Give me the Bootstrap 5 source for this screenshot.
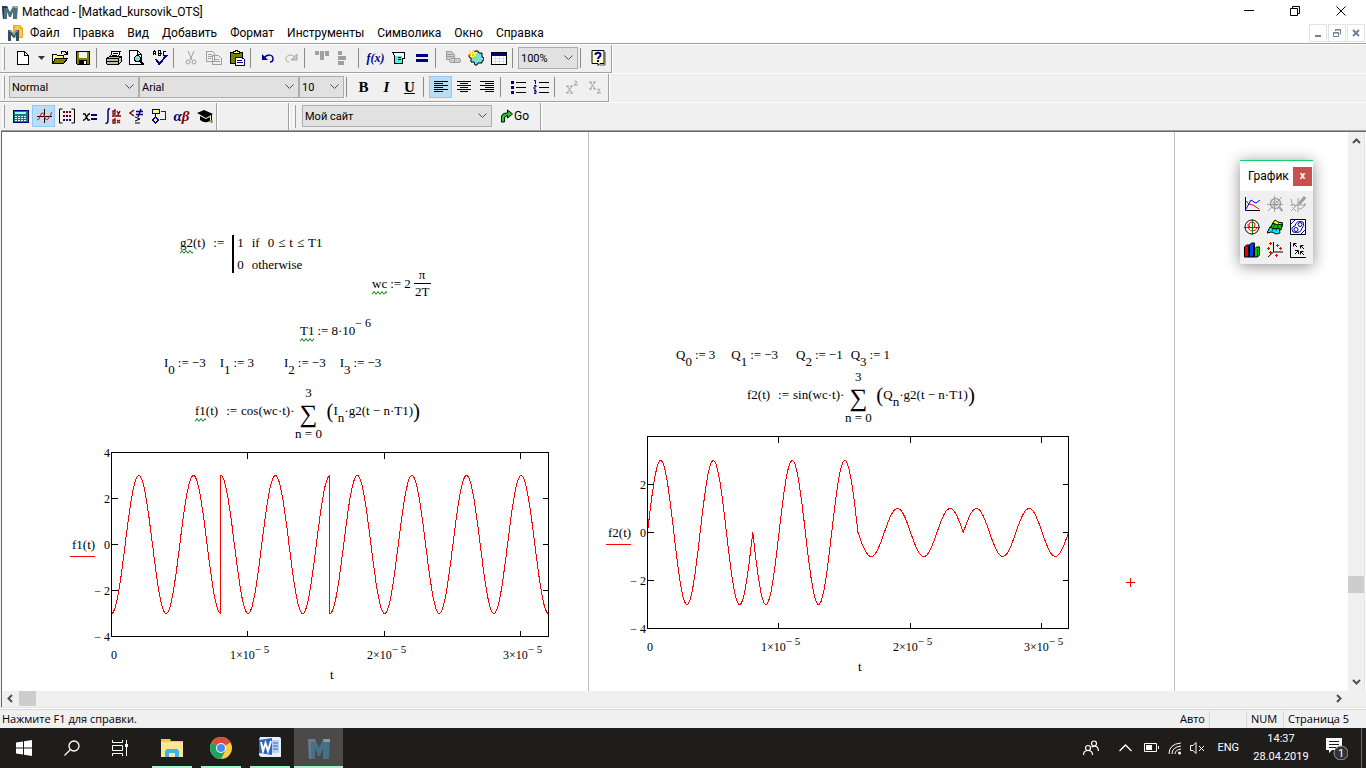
<!DOCTYPE html>
<html lang="ru">
<head>
<meta charset="utf-8">
<meta name="viewport" content="width=device-width, initial-scale=1">
<title>Mathcad - [Matkad_kursovik_OTS]</title>
<link href="https://cdn.jsdelivr.net/npm/bootstrap@5.3.0/dist/css/bootstrap.min.css" rel="stylesheet">
<style>
  :root { --ui: Roboto, "Open Sans", sans-serif; --face: #f0f0f0; --shade: #a0a0a0; }
  body { font: 12px/16px var(--ui); color: #000; background: var(--face); }
  svg { display: block; flex: none; }
  button { font: inherit; color: inherit; background: none; border: 0; padding: 0; }

  .title-bar { height: 23px; background: #fff; padding: 0 2px; }
  .caption-btn { width: 46px; height: 22px; }
  .menu-bar { height: 21px; background: #fff; border-bottom: 1px solid var(--shade); padding-right: 1px; }
  .menu-bar .nav { gap: 13px; }
  .menu-bar .nav-link { color: #000; line-height: 18px; }
  .menu-icon { margin: 0 7px 0 8px; }
  .mdi-group { gap: 1px; }
  .mdi-btn { width: 18px; height: 18px; border: 1px solid #e3e3e3; }

  .tool-row { height: 29px; border-top: 1px solid #fff; }
  .tool-strip { height: 28px; padding: 0 2px 1px; border-right: 1px solid var(--shade); border-bottom: 1px solid var(--shade); box-shadow: 1px 0 #fff; }
  .tool-row:last-child .tool-strip { border-bottom: 0; padding-bottom: 2px; }
  .grip { width: 3px; height: 23px; border-left: 1px solid #fff; border-right: 1px solid var(--shade); }
  .grip-wide { margin-right: 6px; }
  .drop-btn { width: 14px; }
  .tool-btn { width: 23px; height: 22px; border: 1px solid transparent; }
  .tool-btn.on { background: #bcdcf4; border-color: #90c8f6; }
  .tool-sep { width: 8px; height: 20px; padding-left: 2px; }
  .tool-sep::before { content: ""; display: block; height: 100%; width: 1px; background: #8a8a8a; }
  .combo { height: 22px; border: 1px solid #adadad; border-radius: 0; padding: 1px 18px 0 2px; font: 11px/18px var(--ui); color: #000; appearance: none;
    background: #e1e1e1 url("data:image/svg+xml,%3Csvg xmlns='http://www.w3.org/2000/svg' width='9' height='6'%3E%3Cpath d='M.5 .5l4 4 4-4' fill='none' stroke='%23505050'/%3E%3C/svg%3E") no-repeat right 4px center; }
  .combo-style { width: 130px; } .combo-face { width: 160px; } .combo-size { width: 45px; }
  .combo-zoom { width: 60px; } .combo-site { width: 190px; }
  .go-btn { width: 46px; height: 22px; }
  .blank-strip { width: 72px; }
  .glyph { font: bold 15px/18px "Liberation Serif", serif; }
  .glyph-small { font-size: 12px; }

  .doc { border-top: 1px solid #696969; border-left: 1px solid #696969; margin-left: 1px; box-shadow: 0 -1px var(--shade); background: #fff; }
  .sheet { overflow: hidden; }
  .page-cell { width: 586px; flex: none; border-right: 1px solid #c0c0c0; }
  .page-cell:first-child { width: 587px; }
  .region { position: absolute; font: 13px/16px "Liberation Serif", serif; white-space: nowrap; display: flex; }
  .region sub { font-size: 13px; line-height: 0; vertical-align: -7px; bottom: 0; }
  .region sup { font-size: 12px; line-height: 0; vertical-align: 8px; top: 0; }
  .terms { display: flex; gap: 3px; }
  .spaced { gap: 14px; }
  .warn { padding-bottom: 4px; background: url("data:image/svg+xml,%3Csvg xmlns='http://www.w3.org/2000/svg' width='4' height='4'%3E%3Cpath d='M0 3.5l2-3 2 3' fill='none' stroke='%23008000'/%3E%3C/svg%3E") repeat-x left bottom; }
  .branch { border-left: 2px solid #000; padding-left: 3px; row-gap: 6px; }
  .frac-top { border-bottom: 1px solid #000; }
  .frac { line-height: 16px; text-align: center; width: 17px; }
  .sum { width: 28px; text-align: center; }
  .sigma { font-size: 25px; line-height: 25px; }
  .tall { font-size: 21px; line-height: 21px; }
  .line-up { padding-bottom: 5px; }
  #r-g2 { left: 178px; top: 103px; }
  #r-wc { left: 370px; top: 135px; }
  #r-t1 { left: 298px; top: 191px; }
  #r-i01 { left: 162px; top: 223px; }
  #r-i23 { left: 282px; top: 223px; }
  #r-f1 { left: 193px; top: 253px; }
  #r-plot1 { left: 66px; top: 313px; }
  #r-q01 { left: 674px; top: 215px; }
  #r-q23 { left: 794px; top: 215px; }
  #r-f2 { left: 745px; top: 237px; }
  #r-plot2 { left: 602px; top: 297px; }
  #r-cross { left: 1124px; top: 446px; }
  .plot text { font: 12px "Liberation Serif", serif; }
  .plot tspan { font-size: 11px; }
  .plot .name { font-size: 13px; }
  .plot .axis { fill: none; stroke: #000; shape-rendering: crispEdges; }
  .plot .trace { fill: none; stroke: #f00; shape-rendering: crispEdges; }

  .palette { position: absolute; right: 35px; top: 28px; width: 73px; background: var(--face); border-top: 1px solid #10d070; box-shadow: 0 2px 14px rgba(0,0,0,.45); }
  .palette-head { background: #fff; height: 30px; padding-right: 1px; }
  .palette-close { width: 19px; height: 19px; background: #c75050; color: #fff; font-weight: bold; font-size: 11px; line-height: 16px; }
  .palette-grid { display: grid; grid-template-columns: repeat(3, 23px); grid-auto-rows: 23px; padding: 2px 2px 2px 0; }

  .vbar { width: 17px; background: var(--face); border-right: 1px solid #e3e3e3; margin-right: 1px; padding: 6px 0; }
  .vbar .thumb { height: 17px; width: 16px; }
  .vbar .rest { height: 86px; }
  .hbar { height: 16px; background: var(--face); padding: 0 24px 1px 5px; gap: 6px; }
  .hbar .thumb { width: 17px; height: 15px; }
  .thumb { background: #cdcdcd; }
  .status { height: 19px; border-top: 1px solid #d7d7d7; box-shadow: 0 -1px #fff, 0 -2px #e3e3e3; margin-top: 2px; padding-left: 2px; font: 11px/18px "Open Sans", sans-serif; }
  .status-cell { border-left: 1px solid #d7d7d7; padding-left: 4px; height: 16px; line-height: 16px; width: 37px; }
  .status-page { width: 83px; }

  .task-bar { height: 40px; background: #1f1d1b; color: #fff; font-size: 11px; }
  .task-btn { width: 48px; height: 40px; }
  .apps { margin-left: 3px; }
  .app-btn { width: 49px; height: 40px; padding-top: 9px; display: flex; flex-direction: column; align-items: center; justify-content: space-between; }
  .app-btn::after { content: ""; width: 40px; height: 2px; background: #a3f5c8; }
  .app-btn.on { background: #4b4a48; }
  .app-btn.on::after { width: 49px; }
  .clock { width: 60px; line-height: 18px; text-align: center; margin: 0 15px 0 12px; }
  .notices { margin-right: 13px; }
  .peek { width: 5px; height: 40px; border-left: 1px solid #6a6866; }
</style>
</head>
<body class="d-flex flex-column vh-100 overflow-hidden">

<header>
  <div class="title-bar d-flex align-items-center">
    <svg width="16" height="16" viewBox="0 0 16 16"><path d="M0 2h5l3 6 3-6h5l-1 13h-4V8l-2 5H7L5 8v7H1z" fill="#4f6f80"/><path d="M0 2h5l1 2H2v11H1z" fill="#243b49"/><path d="M11 2h5v2h-4z" fill="#8fa9b6"/></svg>
    <span class="ms-1">Mathcad - [Matkad_kursovik_OTS]</span>
    <div class="ms-auto d-flex">
      <button class="caption-btn d-grid" aria-label="Свернуть"><svg class="m-auto" width="11" height="11"><path d="M0 4.500h10" stroke="#000"/></svg></button>
      <button class="caption-btn d-grid" aria-label="Восстановить"><svg class="m-auto" width="11" height="11" fill="none" stroke="#000"><path d="M.5 2.500h7v7h-7zM2.500 2V.5h7v7H8"/></svg></button>
      <button class="caption-btn d-grid" aria-label="Закрыть"><svg class="m-auto" width="11" height="11" stroke="#000"><path d="M.5.5l9 9M9.500.5l-9 9"/></svg></button>
    </div>
  </div>
  <div class="menu-bar d-flex align-items-center">
    <svg class="menu-icon" width="15" height="16" viewBox="0 0 15 16"><path d="M5 0h7l3 3v10H5z" fill="#f5a81c"/><path d="M7 1h5v3h2v8H7z" fill="#fbc84a"/><path d="M0 5h3l3 4 2-4h3v11H8v-6l-2 3-3-3v6H0z" fill="#33505f"/><path d="M1 6h2l3 4 2-4h2" stroke="#9bb3be" fill="none"/></svg>
    <nav class="nav flex-nowrap">
      <a class="nav-link p-0" href="#">Файл</a><a class="nav-link p-0" href="#">Правка</a><a class="nav-link p-0" href="#">Вид</a><a class="nav-link p-0" href="#">Добавить</a><a class="nav-link p-0" href="#">Формат</a><a class="nav-link p-0" href="#">Инструменты</a><a class="nav-link p-0" href="#">Символика</a><a class="nav-link p-0" href="#">Окно</a><a class="nav-link p-0" href="#">Справка</a>
    </nav>
    <div class="mdi-group ms-auto d-flex">
      <button class="mdi-btn d-grid" aria-label="Свернуть документ"><svg class="m-auto" width="10" height="10"><path d="M2 8h6" stroke="#6f8294" stroke-width="2"/></svg></button>
      <button class="mdi-btn d-grid" aria-label="Восстановить документ"><svg class="m-auto" width="10" height="10" fill="none" stroke="#6f8294"><path d="M1.500 4.500h5v4h-5zM1 5h6M3.500 3V1.500h5V6H7.500M3 2h6"/></svg></button>
      <button class="mdi-btn d-grid" aria-label="Закрыть документ"><svg class="m-auto" width="10" height="10" stroke="#6f8294" stroke-width="2"><path d="M2 2l6 6M8 2L2 8"/></svg></button>
    </div>
  </div>

  <div class="tool-row d-flex">
    <div class="tool-strip d-flex align-items-center">
      <span class="grip grip-wide"></span>
      <button class="tool-btn d-grid" aria-label="Создать"><svg class="m-auto" width="16" height="16" shape-rendering="crispEdges"><path d="M2.500 1.500h7l4 4v9h-11z" fill="#fff" stroke="#000"/><path d="M9.500 1.500v4h4" fill="none" stroke="#000"/></svg></button>
      <button class="drop-btn d-grid" aria-label="Шаблоны"><svg class="m-auto" width="7" height="4"><path d="M0 0h7L3.500 4z" fill="#333"/></svg></button>
      <button class="tool-btn d-grid" aria-label="Открыть"><svg class="m-auto" width="16" height="16" shape-rendering="crispEdges"><path d="M.5 13.500v-9h4l1 1h6v3" fill="#ffff80" stroke="#000"/><path d="M.5 13.500l3-5h12l-4 5z" fill="#808000" stroke="#000"/><path d="M9 3.500l1-2h3l2 2M15.500 1v3.500H12" fill="none" stroke="#000"/></svg></button>
      <button class="tool-btn d-grid" aria-label="Сохранить"><svg class="m-auto" width="16" height="16" shape-rendering="crispEdges"><path d="M1.500 1.500h13v13h-12l-1-1z" fill="#808000" stroke="#000"/><path d="M4 2h8v6H4z" fill="#f0f0f0"/><path d="M4 10h8v5H4z" fill="#000"/><path d="M9 11h2v3H9z" fill="#fff"/></svg></button>
      <span class="tool-sep"></span>
      <button class="tool-btn d-grid" aria-label="Печать"><svg class="m-auto" width="16" height="16" shape-rendering="crispEdges"><path d="M4.500 6.500l1.500-5h8l-1.500 5z" fill="#fff" stroke="#000"/><path d="M7 3.500h5M6 5.500h5" stroke="#000"/><path d="M.5 8.500l3-2h12v5l-3 3H1.500l-1-1z" fill="#c0c0c0" stroke="#000"/><path d="M.5 8.500h12v6M12.500 8.500l3-2M1 11.500h11" stroke="#000" fill="none"/><path d="M8 10h3" stroke="#e0c000"/></svg></button>
      <button class="tool-btn d-grid" aria-label="Просмотр"><svg class="m-auto" width="16" height="16" shape-rendering="crispEdges"><path d="M.5.5h8l4 4v10H.5z" fill="#fff" stroke="#000"/><path d="M8.500.5v4h4" fill="none" stroke="#000"/><circle cx="8.500" cy="8.500" r="3" fill="#80e0e0" stroke="#000"/><path d="M11 11l4 4" stroke="#000" stroke-width="2"/></svg></button>
      <button class="tool-btn d-grid" aria-label="Орфография"><svg class="m-auto" width="16" height="16" shape-rendering="crispEdges"><path d="M1.500 5V2l1-1 1 1v3M1 3.500h3M6.500 5.500v-5h2v5h-2M6.500 3h3M13.500 1.500h-2v4h2" fill="none" stroke="#000"/><path d="M4 9l3 5 8-9" fill="none" stroke="#000090" stroke-width="2"/></svg></button>
      <span class="tool-sep"></span>
      <button class="tool-btn d-grid" aria-label="Вырезать"><svg class="m-auto" width="16" height="16" fill="none" stroke="#a0a0a0"><path d="M5 1l4 9M11 1L7 10"/><circle cx="5" cy="12" r="2"/><circle cx="11" cy="12" r="2"/></svg></button>
      <button class="tool-btn d-grid" aria-label="Копировать"><svg class="m-auto" width="16" height="16" fill="#f0f0f0" stroke="#a0a0a0" shape-rendering="crispEdges"><path d="M.5 1.500h6l2 2v8h-8zM6.500 5.500h6l3 3v6h-9z"/><path d="M2 4.500h4M2 6.500h4M2 8.500h3M8 9.500h5M8 11.500h6"/></svg></button>
      <button class="tool-btn d-grid" aria-label="Вставить"><svg class="m-auto" width="16" height="16" shape-rendering="crispEdges"><path d="M1.500 2.500h12v11h-12z" fill="#808000" stroke="#000"/><path d="M4.500 3.500h6v-2h-2v-1h-2v1h-2z" fill="#ffff80" stroke="#000"/><path d="M6.500 7.500h6l3 2v6h-9z" fill="#fff" stroke="#000080"/><path d="M8 10.500h5M8 12.500h6" stroke="#000080"/></svg></button>
      <span class="tool-sep"></span>
      <button class="tool-btn d-grid" aria-label="Отменить"><svg class="m-auto" width="16" height="16" fill="none" stroke="#000090"><path d="M4 8c3-4 9-4 9 1 0 2-1 3-3 3" stroke-width="1.500"/><path d="M2 4v6h6z" fill="#000090" stroke="none"/></svg></button>
      <button class="tool-btn d-grid" aria-label="Повторить"><svg class="m-auto" width="16" height="16" fill="none" stroke="#a8a8a8"><path d="M13 8C10 4 3 4 3 9c0 2 1 3 3 3"/><path d="M14 4v6H8z" fill="#c8c8c8"/></svg></button>
      <span class="tool-sep"></span>
      <button class="tool-btn d-grid" aria-label="Выровнять по верху"><svg class="m-auto" width="16" height="16" fill="#a0a0a0"><path d="M1 1h4v4H1zM6 1h4v9H6zM11 1h4v5h-4z"/></svg></button>
      <button class="tool-btn d-grid" aria-label="Выровнять по левому краю"><svg class="m-auto" width="16" height="16" fill="#a0a0a0"><path d="M1 1h4v4H1zM1 6h8v4H1zM1 11h6v4H1z"/></svg></button>
      <span class="tool-sep"></span>
      <button class="tool-btn glyph glyph-small fst-italic" style="color:#000080" aria-label="Функция">f(x)</button>
      <button class="tool-btn d-grid" aria-label="Единицы"><svg class="m-auto" width="16" height="16" shape-rendering="crispEdges"><path d="M1.500 2.500h12v6h-2v5h-8v-8z" fill="#fff" stroke="#000"/><path d="M4 6h7v7H4z" fill="#60e8e8"/><path d="M7 7.500h3M7 9.500h3" stroke="#000"/></svg></button>
      <button class="tool-btn d-grid" aria-label="Вычислить"><svg class="m-auto" width="16" height="16" fill="#000080"><path d="M2 4h12v3H2zM2 9h12v3H2z"/></svg></button>
      <span class="tool-sep"></span>
      <button class="tool-btn d-grid" aria-label="Гиперссылка"><svg class="m-auto" width="16" height="16" fill="#ccc" stroke="#a0a0a0" shape-rendering="crispEdges"><path d="M1.500 1.500h5l3 3v5h-8zM2 4.500h6M2 6.500h7"/><rect x="4.500" y="8.500" width="6" height="4" rx="2"/><rect x="9.500" y="8.500" width="6" height="4" rx="2"/></svg></button>
      <button class="tool-btn d-grid" aria-label="Компонент"><svg class="m-auto" width="16" height="16"><path d="M3 3h3l1-2h3l1 2h3v4l2 1v2l-2 1v2h-4l-1 2H7l-1-3H3V8L1 7V5z" fill="#70e0e0" stroke="#000"/><path d="M1 2h8l-2 5H2z" fill="#ffff40"/><path d="M1 1l8 8M5 0v6M0 5h6" stroke="#d0b000" stroke-dasharray="1 1"/></svg></button>
      <button class="tool-btn d-grid" aria-label="Таблица"><svg class="m-auto" width="16" height="16" shape-rendering="crispEdges"><path d="M.5 2.500h15v12H.5z" fill="#fff" stroke="#000"/><path d="M1 3h14v3H1z" fill="#000090"/><path d="M1 8.500h14M1 11.500h14M4.500 6v8M8.500 6v8M12.500 6v8" stroke="#ddd"/></svg></button>
      <span class="tool-sep"></span>
      <select class="combo combo-zoom" aria-label="Масштаб"><option>100%</option></select>
      <span class="tool-sep"></span>
      <button class="tool-btn d-grid" aria-label="Справка"><svg class="m-auto" width="16" height="16"><path d="M2 .5h12v13h-4l-2 2v-2H2z" fill="#ffffc8" stroke="#000"/><path d="M15 2v13h-5" stroke="#555" fill="none"/><path d="M5.500 5c0-3 5-3 5 0 0 2-2.500 2-2.500 4M8 10v2" fill="none" stroke="#000090" stroke-width="2"/></svg></button>
    </div>
  </div>

  <div class="tool-row d-flex">
    <div class="tool-strip d-flex align-items-center">
      <span class="grip me-1"></span>
      <select class="combo combo-style" aria-label="Стиль"><option>Normal</option></select>
      <select class="combo combo-face" aria-label="Шрифт"><option>Arial</option></select>
      <select class="combo combo-size" aria-label="Размер"><option>10</option></select>
      <span class="tool-sep"></span>
      <button class="tool-btn glyph">B</button>
      <button class="tool-btn glyph fst-italic">I</button>
      <button class="tool-btn glyph text-decoration-underline">U</button>
      <span class="tool-sep"></span>
      <button class="tool-btn on d-grid" aria-label="По левому краю"><svg class="m-auto" width="16" height="14" stroke="#000"><path d="M1 1.500h14M1 3.500h9M1 5.500h14M1 7.500h9M1 9.500h14M1 11.500h9"/></svg></button>
      <button class="tool-btn d-grid" aria-label="По центру"><svg class="m-auto" width="16" height="14" stroke="#000"><path d="M1 1.500h14M4 3.500h8M1 5.500h14M4 7.500h8M1 9.500h14M4 11.500h8"/></svg></button>
      <button class="tool-btn d-grid" aria-label="По правому краю"><svg class="m-auto" width="16" height="14" stroke="#000"><path d="M1 1.500h14M6 3.500h9M1 5.500h14M6 7.500h9M1 9.500h14M6 11.500h9"/></svg></button>
      <span class="tool-sep"></span>
      <button class="tool-btn d-grid" aria-label="Маркеры"><svg class="m-auto" width="16" height="14"><path d="M1 1h3v3H1zM1 6h3v3H1zM1 11h3v3H1z" fill="#000080"/><path d="M6 2.500h10M6 7.500h10M6 12.500h10" stroke="#000"/></svg></button>
      <button class="tool-btn d-grid" aria-label="Нумерация"><svg class="m-auto" width="16" height="14"><path d="M1 .5h1.500V4M1 5.500h2v1.500H1V9h2M1 10.500h2v3H1M1 12h2" fill="none" stroke="#000080"/><path d="M6 2.500h10M6 7.500h10M6 12.500h10" stroke="#000"/></svg></button>
      <span class="tool-sep"></span>
      <button class="tool-btn d-grid" aria-label="Верхний индекс"><svg class="m-auto" width="16" height="14" fill="none" stroke="#a0a0a0"><path d="M3 6l5 7M8 6l-5 7M2 6h3M6 6h3M2 13h3M6 13h3M10 2q2-2 3 0 0 1-3 3h4"/></svg></button>
      <button class="tool-btn d-grid" aria-label="Нижний индекс"><svg class="m-auto" width="16" height="14" fill="none" stroke="#a0a0a0"><path d="M3 2l5 7M8 2L3 9M2 2h3M6 2h3M2 9h3M6 9h3M10 10q2-2 3 0 0 1-3 3h4"/></svg></button>
    </div>
  </div>

  <div class="tool-row d-flex">
    <div class="tool-strip d-flex align-items-center pe-0">
      <span class="grip me-1"></span>
      <button class="tool-btn d-grid" aria-label="Калькулятор"><svg class="m-auto" width="16" height="16" shape-rendering="crispEdges"><path d="M0 2h15v12H0z" fill="#008080" stroke="#000080"/><path d="M2 4h11v2H2z" fill="#a0ffff"/><path d="M2 8.500h11M2 10.500h11M2 12.500h11" stroke="#fff" stroke-dasharray="2 1"/></svg></button>
      <button class="tool-btn on d-grid" aria-label="График"><svg class="m-auto" width="16" height="16" fill="none"><path d="M8.500 1v14M1 8.500h15" stroke="#000"/><path d="M1 12q2 0 3-3.500Q5 4 7 5q1 1 2 5 1 3 3 1 2-3 4-7" stroke="red"/></svg></button>
      <button class="tool-btn d-grid" aria-label="Матрица"><svg class="m-auto" width="16" height="16" fill="none" stroke="#000"><path d="M3.500 1h-3v14h3M12.500 1h3v14h-3"/><g fill="#800000" stroke="none"><path d="M4 3h2v2H4zM7 3h2v2H7zM10 3h2v2h-2zM4 7h2v2H4zM10 7h2v2h-2zM7 11h2v2H7z"/><path d="M7 7h2v2H7zM4 11h2v2H4zM10 11h2v2h-2z" fill="#000080"/></g></svg></button>
      <button class="tool-btn d-grid" aria-label="Вычисление"><svg class="m-auto" width="16" height="16" fill="none"><path d="M1 6h2l3 6h2M8 5.500Q6 6 4.500 9T1 12.500" stroke="#000" stroke-width="1.300"/><path d="M9 7h6M9 11h6" stroke="#000080" stroke-width="2"/></svg></button>
      <button class="tool-btn d-grid" aria-label="Матанализ"><svg class="m-auto" width="16" height="16" fill="none"><path d="M5 1Q3 0 3 4v8q0 4-2.500 3" stroke="#000080" stroke-width="1.500"/><path d="M7 8h9M10 1v5H8V3h2M12 3l1.500 3L15 3M13.500 6l-1 2M10 10v5H8v-3h2M12 12l3 3M15 12l-3 3" stroke="#800000" stroke-width="1.300"/></svg></button>
      <button class="tool-btn d-grid" aria-label="Булева алгебра"><svg class="m-auto" width="16" height="16" fill="none"><path d="M6 2L2 5l4 3" stroke="#800000" stroke-width="1.500"/><path d="M8 3.500h7M8 6.500h7M13 1L10 9" stroke="#000080" stroke-width="1.500"/><path d="M7 9l5 2-5 2M7 15h5" stroke="#000"/></svg></button>
      <button class="tool-btn d-grid" aria-label="Программирование"><svg class="m-auto" width="16" height="16" fill="none" shape-rendering="crispEdges"><path d="M1.500 1.500h7v4h-7z" fill="#ffff80" stroke="#000080"/><path d="M4.500 9l3 3-3 3-3-3z" fill="#ffff80" stroke="#000080"/><path d="M4.500 6v3" stroke="#000"/><path d="M10 3.500h4.500v8H9" stroke="#800000"/></svg></button>
      <button class="tool-btn glyph fst-italic" style="color:#000080">α<span style="color:#800000">β</span></button>
      <button class="tool-btn d-grid" aria-label="Символика"><svg class="m-auto" width="16" height="16"><path d="M0 5l7-3 9 4-7 4z"/><path d="M3 8l6 3 4-2v4q-5 3-10-1z"/><path d="M14.500 7v5" stroke="#000"/><path d="M13.500 12h2v3h-2z" fill="#808000"/></svg></button>
    </div>
    <div class="blank-strip tool-strip"></div>
    <div class="tool-strip d-flex align-items-center ps-1">
      <span class="grip grip-wide"></span>
      <select class="combo combo-site" aria-label="Ресурс"><option>Мой сайт</option></select>
      <button class="go-btn d-flex align-items-center ps-2"><svg width="14" height="16" viewBox="0 0 14 16"><path d="M1.500 14V9q0-4 6-4V2l5 4-5 4V7.500Q4.500 8 4.500 10v4z" fill="#20d020" stroke="#000"/></svg><span>Go</span></button>
    </div>
  </div>
</header>

<main class="flex-grow-1 d-flex flex-column doc">
  <div class="d-flex flex-grow-1">
    <section class="sheet d-flex flex-grow-1 position-relative" aria-label="Документ">
      <div class="page-cell"></div><div class="page-cell"></div>

      <div class="region" id="r-g2"><span><span class="warn">g2</span>(t)</span><span class="ms-2">:=</span>
        <div class="branch ms-2 d-grid"><span class="d-flex"><span class="me-2">1</span><span class="me-2">if</span><span class="d-flex gap-1"><span>0</span><span>≤</span><span>t</span><span>≤</span><span>T1</span></span></span><span class="d-flex"><span class="me-2">0</span><span>otherwise</span></span></div></div>
      <div class="region terms align-items-center" id="r-wc"><span><span class="warn">wc</span></span><span>:=</span><span>2</span><span class="frac"><span class="d-block frac-top">π</span>2T</span></div>
      <div class="region terms" id="r-t1"><span><span class="warn">T1</span></span><span>:=</span><span>8·10<sup>− 6</sup></span></div>
      <div class="region spaced" id="r-i01"><span class="terms"><span>I<sub>0</sub></span><span>:=</span><span>−3</span></span><span class="terms"><span>I<sub>1</sub></span><span>:=</span><span>3</span></span></div>
      <div class="region spaced" id="r-i23"><span class="terms"><span>I<sub>2</sub></span><span>:=</span><span>−3</span></span><span class="terms"><span>I<sub>3</sub></span><span>:=</span><span>−3</span></span></div>
      <div class="region align-items-center" id="r-f1"><span class="line-up d-flex"><span class="me-2"><span class="warn">f1</span>(t)</span><span class="me-1">:=</span><span>cos(wc·t)·</span></span><span class="sum d-grid"><span>3</span><span class="sigma">∑</span><span>n = 0</span></span><span class="line-up d-flex align-items-center ms-1"><span class="tall">(</span><span>I<sub>n</sub>·g2(t − n·T1)</span><span class="tall">)</span></span></div>
      <div class="region plot" id="r-plot1"><svg width="490" height="240" viewBox="68 445 490 240"><path class="trace" id="trace1"/><path class="axis" id="axis1"/>
        <g text-anchor="end"><text x="110" y="457">4</text><text x="110" y="503">2</text><text x="110" y="549">0</text><text x="110" y="595">− 2</text><text x="110" y="641">− 4</text></g>
        <text x="111" y="659">0</text><text x="230" y="659">1×10<tspan dy="-6">− 5</tspan></text><text x="367" y="659">2×10<tspan dy="-6">− 5</tspan></text><text x="503" y="659">3×10<tspan dy="-6">− 5</tspan></text>
        <text class="name" x="330" y="679">t</text><text class="name" x="72" y="549">f1(t)</text><path class="trace" d="M70 556.500h25"/></svg></div>

      <div class="region gap-3" id="r-q01"><span class="terms"><span>Q<sub>0</sub></span><span>:=</span><span>3</span></span><span class="terms"><span>Q<sub>1</sub></span><span>:=</span><span>−3</span></span></div>
      <div class="region gap-2" id="r-q23"><span class="terms"><span>Q<sub>2</sub></span><span>:=</span><span>−1</span></span><span class="terms"><span>Q<sub>3</sub></span><span>:=</span><span>1</span></span></div>
      <div class="region align-items-center" id="r-f2"><span class="line-up d-flex"><span class="me-2">f2(t)</span><span class="me-1">:=</span><span>sin(wc·t)·</span></span><span class="sum d-grid"><span>3</span><span class="sigma">∑</span><span>n = 0</span></span><span class="line-up d-flex align-items-center ms-1"><span class="tall">(</span><span>Q<sub>n</sub>·g2(t − n·T1)</span><span class="tall">)</span></span></div>
      <div class="region plot" id="r-plot2"><svg width="476" height="250" viewBox="604 429 476 250"><path class="trace" id="trace2"/><path class="axis" id="axis2"/>
        <g text-anchor="end"><text x="646" y="489">2</text><text x="646" y="537">0</text><text x="646" y="585">− 2</text><text x="646" y="633">− 4</text></g>
        <text x="647" y="651">0</text><text x="761" y="651">1×10<tspan dy="-6">− 5</tspan></text><text x="893" y="651">2×10<tspan dy="-6">− 5</tspan></text><text x="1024" y="651">3×10<tspan dy="-6">− 5</tspan></text>
        <text class="name" x="858" y="671">t</text><text class="name" x="608" y="537">f2(t)</text><path class="trace" d="M606 544.500h25"/></svg></div>
      <div class="region" id="r-cross"><svg width="9" height="9"><path d="M0 4.500h9M4.500 0v9" stroke="red"/></svg></div>

      <aside class="palette" aria-label="График">
        <div class="palette-head d-flex align-items-center justify-content-between ps-2"><span>График</span><button class="palette-close" aria-label="Закрыть панель">x</button></div>
        <div class="palette-grid">
          <button class="tool-btn d-grid" aria-label="График X-Y"><svg class="m-auto" width="16" height="16" fill="none"><path d="M1.500 1v13.500H16" stroke="#000"/><path d="M2 13l5-9 3 2 2 1 4-3" stroke="#00f"/><path d="M2 5l3 3 4 1 6 4" stroke="red"/></svg></button>
          <button class="tool-btn d-grid" aria-label="Масштаб графика"><svg class="m-auto" width="16" height="16" fill="none" stroke="#a0a0a0"><circle cx="8.500" cy="7.500" r="5" stroke-width="1.500"/><circle cx="8.500" cy="7.500" r="2.500"/><path d="M0 8.500h16M7.500 0v16M1 15L15 1"/><path d="M12 11l3.500 4" stroke-width="2"/></svg></button>
          <button class="tool-btn d-grid" aria-label="Трассировка"><svg class="m-auto" width="16" height="16" fill="none" stroke="#a0a0a0"><path d="M8 2v14M0 9h16M1 3q0 5 4 7M1 15l6-6M2 11l4 4M15 7q0 5-6 6"/><path d="M9 8l6-7" stroke-width="3"/></svg></button>
          <button class="tool-btn d-grid" aria-label="Полярный график"><svg class="m-auto" width="16" height="16" fill="none"><circle cx="8" cy="8" r="7" fill="#fff" stroke="#000"/><circle cx="8" cy="6" r="3" stroke="red"/><path d="M4 5q0 7 4 7t5-3" stroke="red"/><path d="M0 8.500h16M8.500 0v16" stroke="#008000"/></svg></button>
          <button class="tool-btn d-grid" aria-label="Поверхность"><svg class="m-auto" width="16" height="16" stroke="#000"><path d="M5 5l3-4 3 2 5 1-1 4-3 1-4-2z" fill="#ff0"/><path d="M3 9l3-5 4 2 5-1-1 6-5-1-3 1z" fill="#0c0"/><path d="M0 14l3-6 4 2 5-1 1 5-4 1-4-2z" fill="#0ee"/><path d="M5 12l3-8M9 12l3-9" fill="none" stroke-width=".6"/></svg></button>
          <button class="tool-btn d-grid" aria-label="Линии уровня"><svg class="m-auto" width="16" height="16" fill="none"><path d="M.5.5h15v15H.5z" fill="#fff" stroke="#000"/><g stroke="#0000a0"><circle cx="10" cy="5.500" r="2"/><circle cx="6" cy="10.500" r="2"/><path d="M3 13Q0 8 5 7q1-6 8-4 2 4-1 6-1 6-9 4M1 5l4-4M11 15l4-4"/></g></svg></button>
          <button class="tool-btn d-grid" aria-label="Столбики"><svg class="m-auto" width="16" height="16" stroke="#000"><path d="M.5 5l2-2h3v12h-5z" fill="#e00"/><path d="M5.500 3l2-2h3v14h-5z" fill="#0040ff"/><path d="M10.500 7l2-2h3v8l-2 2h-3z" fill="#0c0"/><path d="M4.500 4v11M9.500 3v12M13.500 7v8"/></svg></button>
          <button class="tool-btn d-grid" aria-label="Точечный график"><svg class="m-auto" width="16" height="16" fill="none"><path d="M6.500 0v10H16M6.500 10L1 15" stroke="#000"/><path d="M2 1.500h3M3.500 0v3M0 6.500h3M1.500 5v3M9 3.500h3M10.500 2v3M12 6.500h3M13.500 5v3M8 13.500h3M9.500 12v3M2 10.500h3M3.500 9v3" stroke="red"/></svg></button>
          <button class="tool-btn d-grid" aria-label="Векторное поле"><svg class="m-auto" width="16" height="16" fill="none" stroke="#000"><path d="M.5 0v15.500H16M4 2l3 3M3.500 4.500v-3h3M11 4l3 3M10.500 6.500v-3h3M5 12l3-3M5 8.500h3.500V12M11 10l3 3M10.500 12.500v-3h3"/></svg></button>
        </div>
      </aside>
    </section>
    <div class="vbar d-flex flex-column align-items-center">
      <svg width="9" height="6" fill="none" stroke="#505050" stroke-width="2"><path d="M1 5l3.500-3.500L8 5"/></svg>
      <span class="flex-grow-1"></span><span class="thumb"></span><span class="rest"></span>
      <svg width="9" height="6" fill="none" stroke="#505050" stroke-width="2"><path d="M1 1l3.500 3.500L8 1"/></svg>
    </div>
  </div>
  <div class="hbar d-flex align-items-center">
    <svg width="6" height="9" fill="none" stroke="#505050" stroke-width="2"><path d="M5 1L1.500 4.500 5 8"/></svg>
    <span class="thumb"></span>
    <svg class="ms-auto" width="6" height="9" fill="none" stroke="#505050" stroke-width="2"><path d="M1 1l3.500 3.500L1 8"/></svg>
  </div>
</main>

<footer>
  <div class="status d-flex align-items-center">
    <span class="flex-grow-1">Нажмите F1 для справки.</span><span class="pe-1">Авто</span>
    <span class="status-cell"></span><span class="status-cell">NUM</span><span class="status-cell status-page">Страница 5</span>
  </div>
  <div class="task-bar d-flex align-items-center">
    <button class="task-btn d-grid" aria-label="Пуск"><svg class="m-auto" width="16" height="16" fill="#fff"><path d="M0 2.500l7-1v6H0zM8 1.300L16 0v7.500H8zM0 8.500h7v6l-7-1zM8 8.500h8V16l-8-1.300z"/></svg></button>
    <button class="task-btn d-grid" aria-label="Поиск"><svg class="m-auto" width="16" height="16" fill="none" stroke="#fff" stroke-width="1.300"><circle cx="10" cy="6" r="5"/><path d="M6.500 9.500L.5 15.500"/></svg></button>
    <button class="task-btn d-grid" aria-label="Представление задач"><svg class="m-auto" width="16" height="16" fill="none" stroke="#fff"><path d="M.5 0v2.500h10V0M.5 5.500h10v5H.5zM.5 16v-2.500h10V16M14.500 0v16"/><path d="M13 4h3v3h-3z" fill="#fff" stroke="none"/></svg></button>
    <div class="apps d-flex">
      <button class="app-btn" aria-label="Проводник"><svg width="22" height="22" viewBox="0 -2 22 22"><path d="M0 0h9l1 2h12v16H0z" fill="#f5c84c"/><path d="M0 3h22v15H0z" fill="#ffe694"/><path d="M4 18v-6l2-2h10l2 2v6h-4v-4H8v4z" fill="#38b5e8"/></svg></button>
      <button class="app-btn" aria-label="Chrome"><svg width="22" height="22" viewBox="0 0 22 22"><circle cx="11" cy="11" r="11" fill="#ffcd42"/><path d="M11 11L1.500 5.500a11 11 0 0 1 19 0z" fill="#dd4b3e"/><path d="M11 11L1.500 5.500A11 11 0 0 0 11 22l4.500-8.500z" fill="#1da362"/><circle cx="11" cy="11" r="5" fill="#fff"/><circle cx="11" cy="11" r="4" fill="#4c8bf5"/></svg></button>
      <button class="app-btn" aria-label="Word"><svg width="22" height="22"><path d="M1 0h19q2 0 2 2v18H3q-3 0-3-3V3z" fill="#e8f1fb"/><path d="M0 3l13-2v17L0 16z" fill="#2a66c0"/><path d="M13 3h7v13h-7" fill="#b9d2ef"/><path d="M2 5l2 9 2.500-8L9 14l3-10" fill="none" stroke="#fff" stroke-width="2"/><path d="M14 6h5M14 9h5M14 12h5" stroke="#2a66c0"/></svg></button>
      <button class="app-btn on" aria-label="Mathcad"><svg width="22" height="22" viewBox="0 -2 22 22"><path d="M0 0h7l4 9 4-9h7l-1 20h-6V9l-3 8h-2L7 9v11H1z" fill="#46708a"/><path d="M0 0h7l1 3H3v17H1z" fill="#6d7b84"/><path d="M15 0h7v3h-6z" fill="#8b9aa3"/></svg></button>
    </div>

    <div class="ms-auto d-flex align-items-center">
      <svg class="me-3" width="16" height="16" fill="none" stroke="#fff" stroke-width="1.200"><circle cx="5" cy="8" r="2.500"/><path d="M.5 15q0-4.500 4.500-4.500T9.500 15"/><circle cx="11" cy="3.500" r="2.500"/><path d="M8.500 7q6.500-3 7 4"/></svg>
      <svg class="mx-1" width="13" height="8" fill="none" stroke="#fff" stroke-width="1.300"><path d="M.5 7l6-6 6 6"/></svg>
      <svg class="ms-2" width="16" height="10" fill="none" stroke="#fff"><path d="M.5.5h12v8H.5zM14.500 3v3"/><path d="M2 2h6v5H2z" fill="#fff" stroke="none"/></svg>
      <svg class="mx-2" width="14" height="14" fill="none" stroke="#fff"><path d="M1 13Q1 3 13 2M4 13q0-7 9-8M7 13q0-4 6-5"/><circle cx="11.500" cy="12" r="1.500" fill="#fff" stroke="none"/></svg>
      <svg width="15" height="14" fill="none" stroke="#fff"><path d="M.5 4.500H3l3-3v11l-3-3H.5zM9 5l5 5M14 5l-5 5"/></svg>
      <span class="ms-2 ps-1">ENG</span>
      <time class="clock">14:37<br>28.04.2019</time>
      <svg class="notices" width="22" height="24"><path d="M0 2h16v12H6l-3 3v-3H0z" fill="#fff"/><path d="M3 5.500h10M3 8.500h10M3 11.500h7" stroke="#1f1d1b"/><circle cx="15" cy="17" r="7" fill="#333" stroke="#999"/><text x="12" y="21" fill="#fff" font-size="11">1</text></svg>
    </div>
    <span class="peek"></span>
  </div>
</footer>

<script src="https://cdn.jsdelivr.net/npm/bootstrap@5.3.0/dist/js/bootstrap.bundle.min.js"></script>
<script>
  // Carrier period is 4e-6 s, symbol length T1 = 8e-6 s, both plots span 0..3.2e-5 s.
  const T1 = 8, PERIOD = 4, SPAN = 32;
  function drawTrace(id, box, symbols, wave) {
    const px = box.w / SPAN, points = [];
    for (let i = 0; i <= SPAN * 20; i++) {
      const t = i / 20, n = Math.min(3, Math.floor(t / T1));
      const value = symbols[n] * wave(2 * Math.PI * t / PERIOD);
      points.push((box.x + t * px).toFixed(1) + ' ' + (box.y + (4 - value) * box.h / 8).toFixed(1));
    }
    document.getElementById(id).setAttribute('d', 'M' + points.join('L'));
  }
  function drawAxes(id, box) {
    let d = `M${box.x} ${box.y}h${box.w}v${box.h}h${-box.w}z`;
    for (const v of [1, 2, 3]) {
      const y = box.y + v * box.h / 4, x = box.x + Math.floor(v * 10 * box.w / SPAN);
      d += `M${box.x} ${y}h6M${box.x + box.w} ${y}h-6M${x} ${box.y}v6M${x} ${box.y + box.h}v-6`;
    }
    document.getElementById(id).setAttribute('d', d);
  }
  const left = { x: 111.5, y: 452.5, w: 437, h: 184 };
  const right = { x: 647.5, y: 436.5, w: 421, h: 192 };
  drawTrace('trace1', left, [-3, 3, -3, -3], Math.cos);
  drawTrace('trace2', right, [3, -3, -1, 1], Math.sin);
  drawAxes('axis1', left);
  drawAxes('axis2', right);
</script>
</body>
</html>
